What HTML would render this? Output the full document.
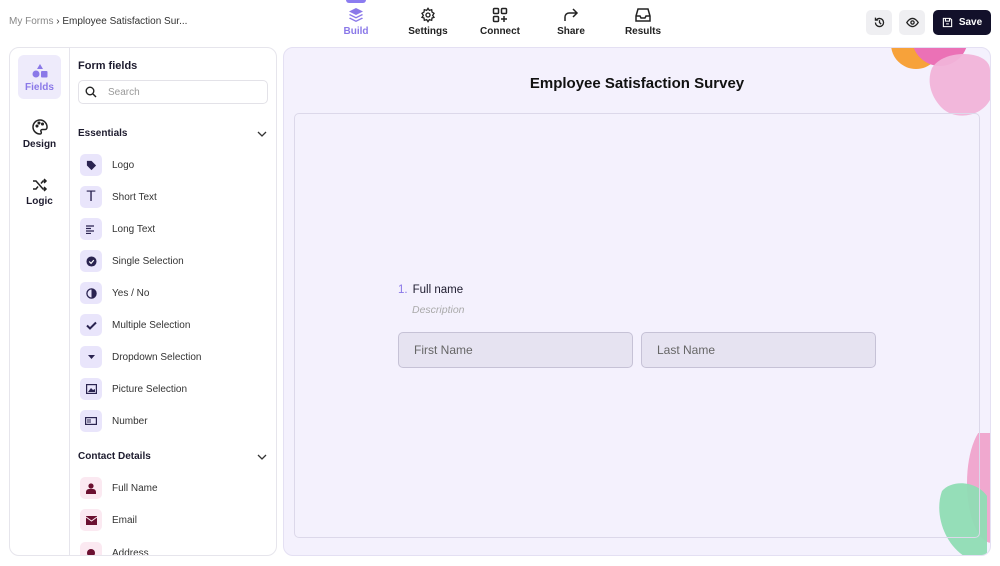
<!DOCTYPE html>
<html><head><meta charset="utf-8"><style>
*{box-sizing:border-box;margin:0;padding:0}
body{width:1000px;height:566px;background:#fff;font-family:"Liberation Sans",sans-serif;color:#1d1b2e;position:relative;overflow:hidden}
.abs{position:absolute}
.crumb{left:9px;top:16px;font-size:10px;color:#333}
.crumb span{color:#888}
.nav{top:0;font-size:10px;font-weight:bold;text-align:center;width:70px;color:#222}
.nav svg{display:block;margin:7px auto 3px}
.btn{top:10px;width:26px;height:25px;border-radius:5px;background:#efeff2;display:flex;align-items:center;justify-content:center}
.save{left:933px;top:10px;width:58px;height:25px;border-radius:5px;background:#12102a;color:#fff;font-size:10px;font-weight:bold;display:flex;align-items:center;justify-content:center;gap:6px}
.left{left:9px;top:47px;width:268px;height:509px;border:1px solid #e6e5ec;border-radius:10px;overflow:hidden}
.rail{left:0;top:0;width:60px;height:100%;border-right:1px solid #e6e5ec}
.ri{left:8px;width:43px;height:44px;border-radius:6px;font-size:10px;font-weight:bold;text-align:center}
.ri svg{display:block;margin:9px auto 4px}
.item{left:70px;font-size:10px;color:#333;height:22px;display:flex;align-items:center}
.ic{width:22px;height:22px;border-radius:5px;background:#e9e5fb;display:flex;align-items:center;justify-content:center;margin-right:10px}
.pk{background:#fbe9f1}
.sec{left:68px;font-size:10px;font-weight:bold}
.chev{left:247px}
.canvas{left:283px;top:47px;width:708px;height:509px;background:#f4f1fd;border:1px solid #e4e0f3;border-radius:10px;overflow:hidden}
.inner{left:10px;top:65px;width:686px;height:425px;border:1px solid #dcd8ea;border-radius:5px}
.inp{top:284px;width:235px;height:36px;border:1px solid #c6c2d6;border-radius:5px;background:#e6e3f1;font-size:12px;color:#666;padding:10px 0 0 15px}
</style></head><body>
<div class="abs crumb"><span>My Forms</span> › Employee Satisfaction Sur...</div>

<div class="abs" style="left:346px;top:0;width:20px;height:3px;background:#8b7cf0;border-radius:0 0 3px 3px"></div>
<div class="abs nav" style="left:321px;color:#8a78e8"><svg width="16" height="16" viewBox="0 0 16 16" fill="#8a78e8"><path d="M8 1L15 4.5 8 8 1 4.5z"/><path d="M2 7l6 3 6-3 1 1-7 3.5L1 8z"/><path d="M2 10.5l6 3 6-3 1 1L8 15 1 11.5z"/></svg>Build</div>
<div class="abs nav" style="left:393px"><svg width="16" height="16" viewBox="0 0 24 24" fill="none" stroke="#222" stroke-width="2"><circle cx="12" cy="12" r="3"/><path d="M12 2l2 3 3.5-1 .5 3.5 3 2-2 3 2 3-3 1-.5 3.5-3.5-1-2 3-2-3-3.5 1-.5-3.5-3-1 2-3-2-3 3-2 .5-3.5 3.5 1z"/></svg>Settings</div>
<div class="abs nav" style="left:465px"><svg width="16" height="16" viewBox="0 0 16 16" fill="none" stroke="#222" stroke-width="1.5"><rect x="1.5" y="1.5" width="5" height="5" rx="1"/><rect x="9.5" y="1.5" width="5" height="5" rx="1"/><rect x="1.5" y="9.5" width="5" height="5" rx="1"/><path d="M12 9v6M9 12h6"/></svg>Connect</div>
<div class="abs nav" style="left:536px"><svg width="16" height="16" viewBox="0 0 16 16" fill="none" stroke="#222" stroke-width="1.5"><path d="M2 14V10a4 4 0 014-4h8M10 2l4 4-4 4"/></svg>Share</div>
<div class="abs nav" style="left:608px"><svg width="16" height="16" viewBox="0 0 16 16" fill="none" stroke="#222" stroke-width="1.5"><path d="M3 2h10l2 7v5H1V9z M1 9h4l1 2h4l1-2h4"/></svg>Results</div>

<div class="abs btn" style="left:866px"><svg width="13" height="13" viewBox="0 0 16 16" fill="none" stroke="#222" stroke-width="1.6"><path d="M3 8a5 5 0 105-5 5 5 0 00-4 2M3 2v3h3M8 5v3l2 2"/></svg></div>
<div class="abs btn" style="left:899px"><svg width="13" height="13" viewBox="0 0 16 16" fill="none" stroke="#222" stroke-width="1.6"><path d="M1 8s3-5 7-5 7 5 7 5-3 5-7 5-7-5-7-5z"/><circle cx="8" cy="8" r="2"/></svg></div>
<div class="abs save"><svg width="11" height="11" viewBox="0 0 16 16" fill="none" stroke="#fff" stroke-width="1.6"><path d="M2 2h10l2 2v10H2z M5 2v4h6V2 M6 10h4"/></svg>Save</div>

<div class="abs left">
 <div class="abs rail">
  <div class="abs ri" style="top:7px;background:#eeebfb;color:#8a78e8"><svg width="16" height="14" viewBox="0 0 16 14" fill="#8a78e8"><path d="M8 0l3 5H5z"/><circle cx="4" cy="10" r="3.5"/><rect x="9" y="7" width="6.5" height="6.5" rx="1"/></svg>Fields</div>
  <div class="abs ri" style="top:62px"><svg width="16" height="16" viewBox="0 0 16 16" fill="none" stroke="#222" stroke-width="1.5"><path d="M8 1a7 7 0 000 14c1.5 0 1.5-1.5 1-2.5s0-2 1.5-2H13a2 2 0 002-2A7 7 0 008 1z"/><circle cx="5" cy="7" r=".8"/><circle cx="7" cy="4" r=".8"/><circle cx="10.5" cy="5" r=".8"/></svg>Design</div>
  <div class="abs ri" style="top:121px"><svg width="16" height="14" viewBox="0 0 16 14" fill="none" stroke="#222" stroke-width="1.5"><path d="M1 3h3l7 8h3M1 11h3l2-2.5M9 5.5L11 3h3M12 1l2 2-2 2M12 9l2 2-2 2"/></svg>Logic</div>
 </div>
 <div class="abs" style="left:68px;top:12px;font-size:11px;font-weight:bold">Form fields</div>
 <div class="abs" style="left:68px;top:32px;width:190px;height:24px;border:1px solid #e3e2e8;border-radius:5px;font-size:10px;color:#999;padding:6px 0 0 29px"><svg class="abs" style="left:6px;top:5px" width="12" height="12" viewBox="0 0 12 12" fill="none" stroke="#222" stroke-width="1.4"><circle cx="5" cy="5" r="3.8"/><path d="M8 8l3 3"/></svg>Search</div>
 <div class="abs sec" style="top:80px">Essentials</div>
 <svg class="abs chev" style="top:82px" width="10" height="8" viewBox="0 0 10 8" fill="none" stroke="#333" stroke-width="1.3"><path d="M1 2l4 4 4-4"/></svg>
 <div class="abs item" style="top:106px"><div class="ic"><svg width="11" height="11" viewBox="0 0 12 12" fill="#2a2350"><path d="M1 1h5l5 5-5 5-5-5z"/></svg></div>Logo</div>
 <div class="abs item" style="top:138px"><div class="ic" style="font-size:14px;font-family:'DejaVu Sans';color:#2a2350">T</div>Short Text</div>
 <div class="abs item" style="top:170px"><div class="ic"><svg width="10" height="9" viewBox="0 0 10 9" stroke="#2a2350" stroke-width="1.2"><path d="M0 1h8M0 3.5h5M0 6h8M0 8.5h5"/></svg></div>Long Text</div>
 <div class="abs item" style="top:202px"><div class="ic"><svg width="11" height="11" viewBox="0 0 12 12"><circle cx="6" cy="6" r="5.5" fill="#2a2350"/><path d="M3.5 6l2 2 3-3.5" stroke="#fff" stroke-width="1.3" fill="none"/></svg></div>Single Selection</div>
 <div class="abs item" style="top:234px"><div class="ic"><svg width="11" height="11" viewBox="0 0 12 12"><circle cx="6" cy="6" r="5" fill="none" stroke="#2a2350" stroke-width="1.4"/><path d="M6 1a5 5 0 010 10z" fill="#2a2350"/></svg></div>Yes / No</div>
 <div class="abs item" style="top:266px"><div class="ic"><svg width="11" height="9" viewBox="0 0 11 9" fill="none" stroke="#2a2350" stroke-width="2"><path d="M1 4.5l3 3 6-6"/></svg></div>Multiple Selection</div>
 <div class="abs item" style="top:298px"><div class="ic"><svg width="7" height="4" viewBox="0 0 7 4" fill="#2a2350"><path d="M0 0h7L3.5 4z"/></svg></div>Dropdown Selection</div>
 <div class="abs item" style="top:330px"><div class="ic"><svg width="11" height="10" viewBox="0 0 11 10"><rect x=".6" y=".6" width="9.8" height="8.8" fill="none" stroke="#2a2350" stroke-width="1.2"/><path d="M2 8l3-4 2 2 2-1v3z" fill="#2a2350"/></svg></div>Picture Selection</div>
 <div class="abs item" style="top:362px"><div class="ic"><svg width="12" height="8" viewBox="0 0 12 8"><rect x=".6" y=".6" width="10.8" height="6.8" fill="none" stroke="#2a2350" stroke-width="1.2"/><path d="M3 2v4M5 2v4" stroke="#2a2350"/></svg></div>Number</div>
 <div class="abs sec" style="top:403px">Contact Details</div>
 <svg class="abs chev" style="top:405px" width="10" height="8" viewBox="0 0 10 8" fill="none" stroke="#333" stroke-width="1.3"><path d="M1 2l4 4 4-4"/></svg>
 <div class="abs item" style="top:429px"><div class="ic pk"><svg width="10" height="11" viewBox="0 0 10 11" fill="#6b1030"><circle cx="5" cy="3" r="2.6"/><path d="M0 11v-2a3 3 0 013-3h4a3 3 0 013 3v2z"/></svg></div>Full Name</div>
 <div class="abs item" style="top:461px"><div class="ic pk"><svg width="11" height="9" viewBox="0 0 11 9" fill="#6b1030"><path d="M0 0h11v9H0z"/><path d="M0 1l5.5 4L11 1" stroke="#fbe9f1" stroke-width="1" fill="none"/></svg></div>Email</div>
 <div class="abs item" style="top:494px"><div class="ic pk"><svg width="10" height="11" viewBox="0 0 10 11" fill="#6b1030"><circle cx="5" cy="5" r="4"/></svg></div>Address</div>
</div>

<div class="abs canvas">
 <svg class="abs" style="left:600px;top:-2px" width="108" height="75" viewBox="0 0 108 75">
  <circle cx="32" cy="-2" r="25" fill="#f7a23a"/>
  <circle cx="56" cy="-8" r="28" fill="#eb71b6"/>
  <path d="M48 22c12-20 58-18 58 2v30c-10 18-36 20-48 8-10-10-16-25-10-40z" fill="#f1b3d9" opacity=".95"/>
 </svg>
 <svg class="abs" style="left:650px;top:385px" width="58" height="124" viewBox="0 0 58 124">
  <ellipse cx="58" cy="50" rx="25" ry="60" fill="#f0a8cf"/>
  <path d="M8 58c10-12 35-10 45 5v60H30C10 110 0 80 8 58z" fill="#8fdcb4" opacity=".95"/>
 </svg>
 <div class="abs inner"></div>
 <div class="abs" style="left:0;width:100%;top:27px;text-align:center;font-size:15px;font-weight:bold;color:#111">Employee Satisfaction Survey</div>
 <div class="abs" style="left:114px;top:236px;font-size:11.5px"><span style="color:#8a78e8;margin-right:5px">1.</span>Full name</div>
 <div class="abs" style="left:128px;top:256px;font-size:10.5px;font-style:italic;color:#aaa">Description</div>
 <div class="abs inp" style="left:114px">First Name</div>
 <div class="abs inp" style="left:357px">Last Name</div>
</div>
</body></html>
